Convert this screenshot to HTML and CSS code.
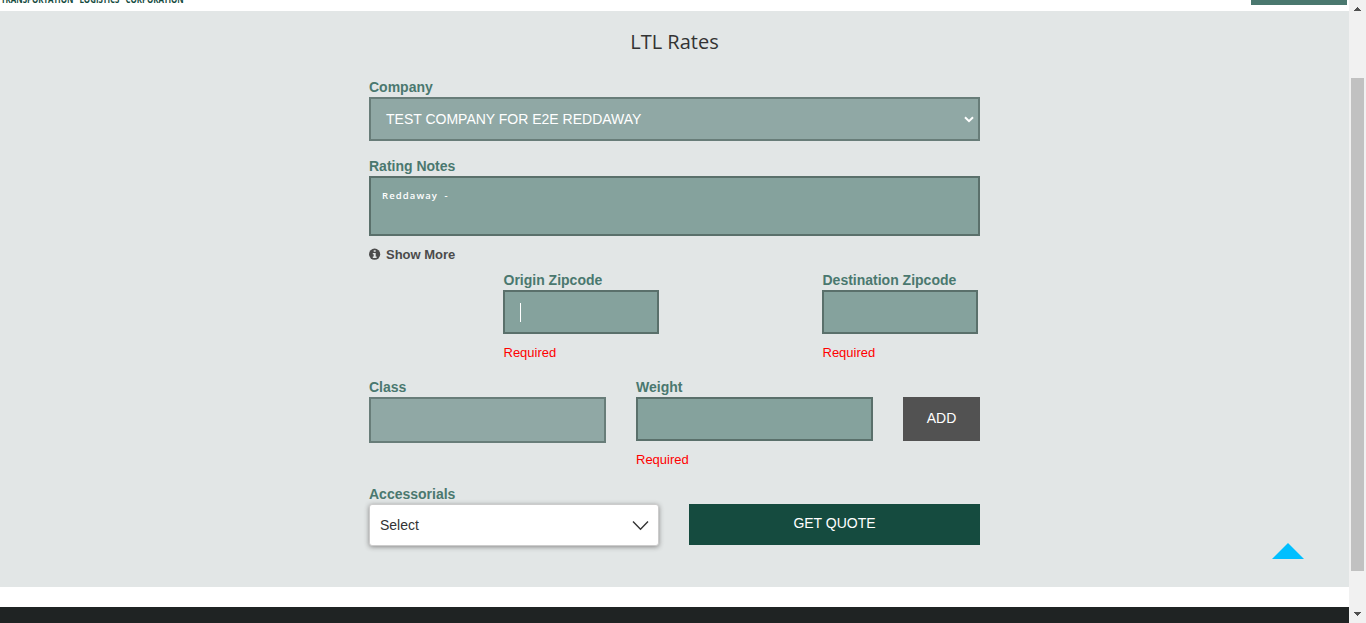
FILE: index.html
```html
<!DOCTYPE html>
<html lang="en">
<head>
<meta charset="utf-8">
<title>LTL Rates</title>
<link rel="stylesheet" href="styles.css">
</head>
<body>
<div class="page">
  <header class="topbar">
    <div class="brand"><span class="brand-text">TRANSPORTATION LOGISTICS CORPORATION</span></div>
    <div class="top-button"></div>
  </header>
  <main class="rates">
    <h1 class="title">LTL Rates</h1>
    <form class="form">
      <div class="group company">
        <label class="label">Company</label>
        <div class="field field-muted select"><span class="select-value">TEST COMPANY FOR E2E REDDAWAY</span>
          <svg class="select-arrow" width="10" height="7" viewBox="0 0 10 7"><path d="M1 1.2 5 5.2 9 1.2" fill="none" stroke="#fff" stroke-width="2"/></svg>
        </div>
      </div>
      <div class="group notes">
        <label class="label">Rating Notes</label>
        <div class="field notes-field">Reddaway -</div>
        <div class="more">
          <svg class="info" width="12" height="12" viewBox="0 0 12 12"><circle cx="5.6" cy="6.2" r="5.6" fill="#4b4b4b"/><path d="M4.7 2.2h2v1.6h-2zM3.8 4.9h2.9v3.7h.9v1.3H3.8V8.6h.9V6.2h-.9z" fill="#e2e6e6"/></svg>
          <span class="more-text">Show More</span>
        </div>
      </div>
      <div class="zips">
        <div class="group zip">
          <label class="label">Origin Zipcode</label>
          <div class="field zip-field"><span class="caret"></span></div>
          <div class="error">Required</div>
        </div>
        <div class="group zip">
          <label class="label">Destination Zipcode</label>
          <div class="field zip-field"></div>
          <div class="error">Required</div>
        </div>
      </div>
      <div class="freight">
        <div class="group">
          <label class="label">Class</label>
          <div class="field field-muted class-field"></div>
        </div>
        <div class="group">
          <label class="label">Weight</label>
          <div class="field"></div>
          <div class="error">Required</div>
        </div>
        <button type="button" class="add">ADD</button>
      </div>
      <div class="submit-row">
        <div class="group">
          <label class="label">Accessorials</label>
          <div class="dropdown"><span class="dropdown-value">Select</span>
            <svg width="17" height="11" viewBox="0 0 17 11"><path d="M1 1.5 8.5 9.2 16 1.5" fill="none" stroke="#333" stroke-width="1.4"/></svg>
          </div>
        </div>
        <button type="button" class="quote">GET QUOTE</button>
      </div>
    </form>
    <svg class="to-top" width="32" height="16" viewBox="0 0 32 16"><path d="M16 0 32 16H0z" fill="#00bfff"/></svg>
  </main>
  <footer class="footer"></footer>
</div>
<aside class="scrollbar">
  <svg class="scroll-up" width="7" height="4" viewBox="0 0 7 4" shape-rendering="crispEdges"><path d="M3 0h1v1h1v1h1v1h1v1H0V3h1V2h1V1h1z" fill="#505050"/></svg>
  <div class="thumb"></div>
  <svg class="scroll-down" width="7" height="4" viewBox="0 0 7 4" shape-rendering="crispEdges"><path d="M0 0h7v1H6v1H5v1H4v1H3V3H2V2H1V1H0z" fill="#505050"/></svg>
</aside>
</body>
</html>
```
FILE: styles.css
```css
* { box-sizing: border-box; }
body {
  margin: 0;
  height: 623px;
  display: flex;
  overflow: hidden;
  background: #fff;
  font-family: "Liberation Sans", Arial, sans-serif;
  font-size: 14px;
  line-height: 20px;
}
svg { display: block; flex: none; }
.page { width: 1349px; display: flex; flex-direction: column; }
.topbar { height: 11px; display: flex; justify-content: space-between; padding-right: 2px; }
.brand { height: 4px; display: flex; align-items: flex-end; padding-left: 1px; }
.brand-text {
  font: bold 10px/10px "Open Sans", sans-serif;
  white-space: nowrap;
  word-spacing: 5px;
  color: #164c3f;
  transform: scaleX(.79);
  transform-origin: left;
}
.top-button { width: 96px; height: 5px; background: #4a786f; }
.rates { position: relative; height: 576px; padding-top: 16px; background: #e2e6e6; }
.title {
  margin: 0 0 20px;
  font: 400 20px/30px "Open Sans", sans-serif;
  text-align: center;
  color: #333;
}
.form { width: 611px; margin-left: 369px; }
.group { display: flex; flex-direction: column; min-width: 0; }
.label { height: 20px; font-weight: bold; color: #4a786f; white-space: nowrap; }
.field {
  height: 44px;
  border: 2px solid #5a706b;
  background: #85a29d;
  color: #fff;
}
.field-muted { border-color: #687d79; background: #90a8a5; }
.select { display: flex; align-items: center; justify-content: space-between; padding: 0 4px 0 15px; }
.company { margin-bottom: 15px; }
.notes-field {
  height: 60px;
  padding: 9px 11px;
  font: 600 9.5px/18px "Open Sans", sans-serif;
  letter-spacing: 1.1px;
  word-spacing: 3px;
}
.more { display: flex; align-items: center; gap: 5px; height: 20px; margin-top: 8px; color: #4b4b4b; font-weight: bold; font-size: 13px; }
.more-text { padding-top: 2px; }
.zips { display: flex; gap: 163px; margin-top: 6px; padding-left: 134px; }
.zip { width: 156px; }
.zip .label, .zip .error { padding-left: .5px; }
.zip-field { display: flex; align-items: center; padding-left: 15px; }
.caret { width: 1px; height: 19px; background: #fff; }
.error { height: 19px; margin-top: 9px; color: #f00; font-size: 13px; }
.freight { display: grid; grid-template-columns: 237px 237px 77px; column-gap: 30px; margin-top: 15px; }
.class-field { height: 46px; }
.add, .quote { border: 0; padding: 0; color: #fff; font: 14px/20px "Liberation Sans", Arial, sans-serif; }
.add { height: 44px; margin-top: 20px; padding-bottom: 2px; background: #525252; }
.submit-row { display: grid; grid-template-columns: 290px 291px; column-gap: 30px; margin-top: 15px; }
.dropdown {
  height: 42px;
  display: flex;
  align-items: center;
  justify-content: space-between;
  padding: 0 9px 0 10px;
  border: 1px solid #ccc;
  border-radius: 3px;
  background: #fff;
  color: #333;
  box-shadow: 0 1px 5px #888;
}
.quote { height: 41px; margin-top: 20px; padding-bottom: 3px; background: #154b3f; }
.to-top { position: absolute; right: 45px; bottom: 28px; }
.footer { height: 16px; margin-top: 20px; background: #1f2323; }
.scrollbar {
  width: 17px;
  display: flex;
  flex-direction: column;
  align-items: center;
  padding: 7px 0 7px;
  background: #f1f1f1;
}
.thumb { width: 13px; height: 493px; margin-top: 67px; background: #c1c1c1; }
.scroll-down { margin-top: auto; }
```
